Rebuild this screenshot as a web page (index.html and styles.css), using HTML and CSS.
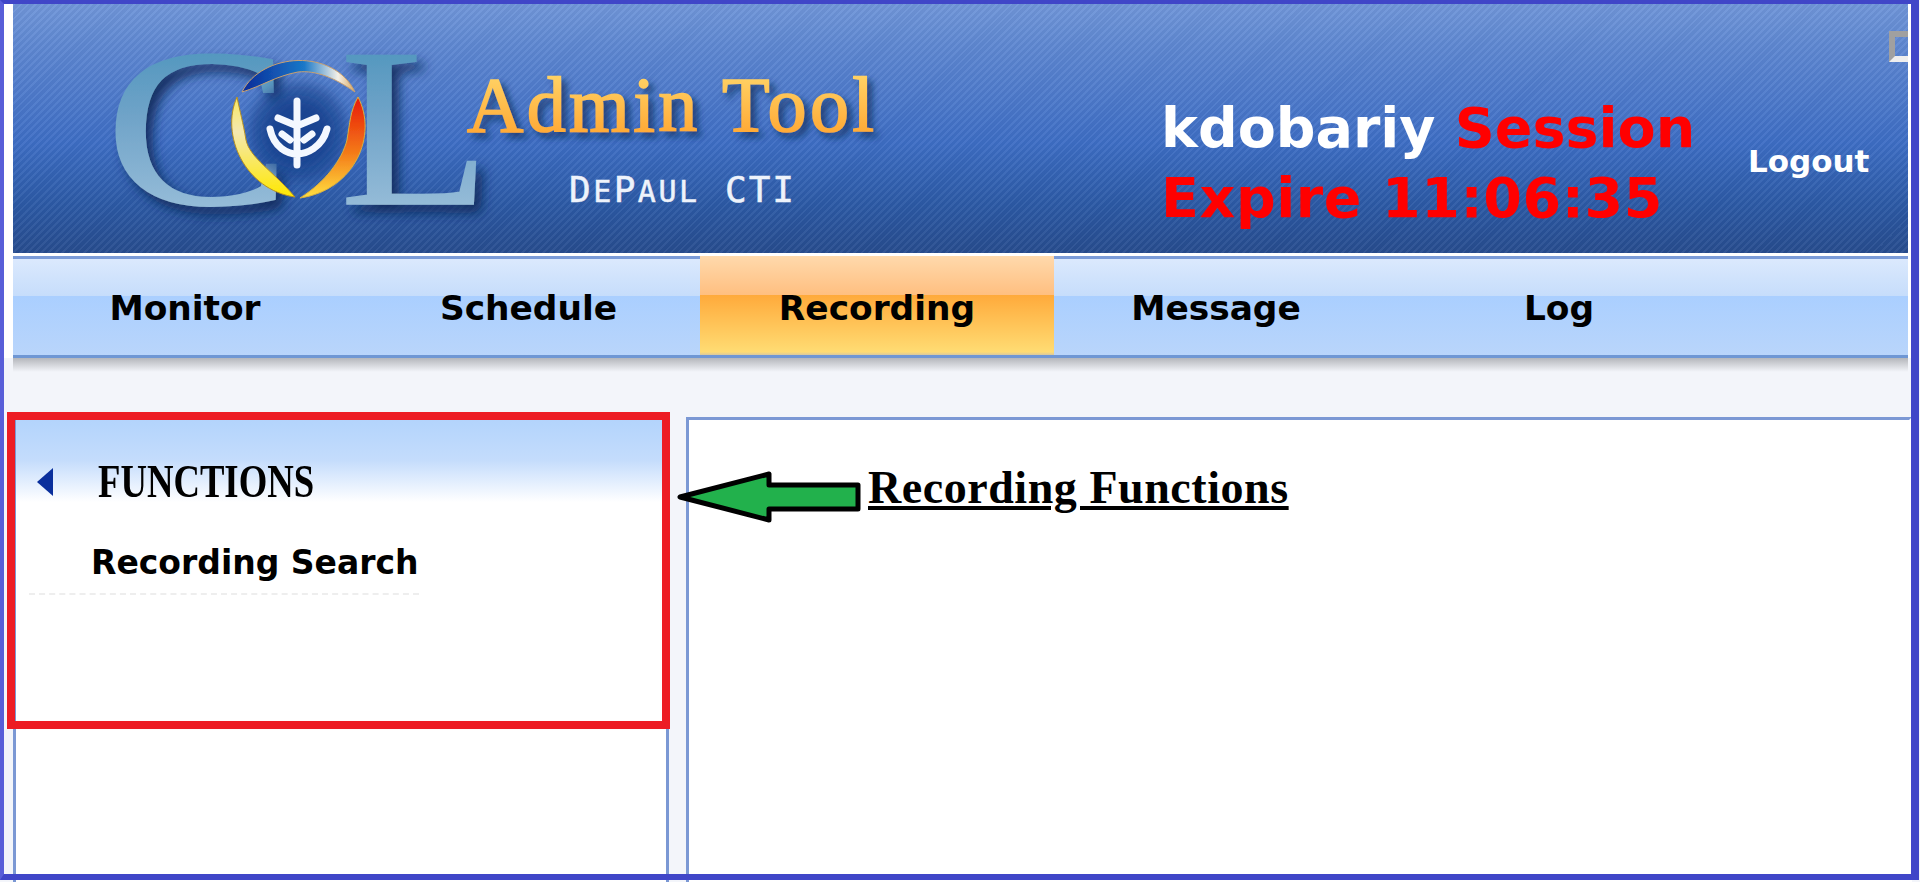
FILE: index.html
```html
<html>

  <head>
    <title>Recording Functions</title>
    <link rel="stylesheet" href="styles.css">
  </head>

  <body>
    <div class="page">
      <div class="top">
        <div class="banner">
          <svg class="logo" width="900" height="249" viewBox="13 4 900 249">
            <defs>
              <linearGradient id="colFill" x1="0" y1="0" x2="0" y2="1">
                <stop offset="0" stop-color="#3f8fb8"/>
                <stop offset="0.45" stop-color="#6fa3c8"/>
                <stop offset="1" stop-color="#a8c8e0"/>
              </linearGradient>
              <linearGradient id="adminFill" x1="0" y1="0" x2="0" y2="1">
                <stop offset="0" stop-color="#ffdc70"/>
                <stop offset="1" stop-color="#ff9f2a"/>
              </linearGradient>
              <linearGradient id="swTop" x1="0" y1="0" x2="1" y2="0">
                <stop offset="0" stop-color="#0a2a98"/>
                <stop offset="0.55" stop-color="#1a78c8"/>
                <stop offset="0.85" stop-color="#f4f0e8"/>
                <stop offset="1" stop-color="#d8a860"/>
              </linearGradient>
              <linearGradient id="swRight" x1="0" y1="0" x2="0" y2="1">
                <stop offset="0" stop-color="#e81808"/>
                <stop offset="0.55" stop-color="#f47a18"/>
                <stop offset="1" stop-color="#ffe040"/>
              </linearGradient>
              <linearGradient id="swLeft" x1="0" y1="0" x2="0" y2="1">
                <stop offset="0" stop-color="#f8e860"/>
                <stop offset="0.35" stop-color="#f4e8b0"/>
                <stop offset="1" stop-color="#ffe800"/>
              </linearGradient>
              <filter id="soft" x="-20%" y="-20%" width="140%" height="140%"><feGaussianBlur stdDeviation="6"/></filter>
              <filter id="tiny" x="-20%" y="-20%" width="140%" height="140%"><feGaussianBlur stdDeviation="0.7"/></filter>
              <filter id="colShadow" x="-20%" y="-20%" width="140%" height="140%"><feDropShadow dx="7" dy="8" stdDeviation="6" flood-color="#0e2c5a" flood-opacity="0.9"/></filter>
              <filter id="adminShadow" x="-10%" y="-20%" width="120%" height="150%"><feDropShadow dx="5" dy="5" stdDeviation="3.5" flood-color="#10305f" flood-opacity="0.8"/></filter>
            </defs>

            <g fill="url(#colFill)" stroke="url(#colFill)" stroke-width="1.5" filter="url(#colShadow)" class="col-letters">
              <text x="105" y="204" textLength="186" lengthAdjust="spacingAndGlyphs">C</text>
              <text x="340" y="204" textLength="150" lengthAdjust="spacingAndGlyphs">L</text>
            </g>

            <circle cx="298" cy="132" r="50" fill="#163f86" opacity="0.55" filter="url(#soft)"/>
            <circle cx="298" cy="132" r="34" fill="#12408e" opacity="0.8" filter="url(#soft)"/>
            <g filter="url(#tiny)">
              <path d="M242 92 C262 52 334 48 355 92 C335 78 316 70 298 72 C276 76 262 86 242 92 Z" fill="url(#swTop)" stroke="#c8a070" stroke-width="1"/>
              <path d="M358 97 C378 135 355 190 300 198 C325 182 342 160 347 140 C350 122 350 112 358 97 Z" fill="url(#swRight)" stroke="#d8b040" stroke-width="1"/>
              <path d="M237 97 C220 135 245 190 295 197 C272 170 250 158 246 140 C243 122 240 112 237 97 Z" fill="url(#swLeft)" stroke="#b89020" stroke-width="1"/>
              <path d="M297 101 V165 M278 118 L297 126 L316 118 M270 129 C274 148 288 154 297 154 C306 154 322 148 327 129 M282 134 L290 140 M312 134 L304 140" fill="none" stroke="#f4f8ff" stroke-width="7" stroke-linecap="round"/>
            </g>

            <text x="467" y="131" class="admin-text" fill="url(#adminFill)" stroke="url(#adminFill)" stroke-width="1.6" filter="url(#adminShadow)" textLength="407" lengthAdjust="spacing">Admin Tool</text>
            <text x="569" y="202" class="depaul-text" textLength="128" lengthAdjust="spacing">D<tspan class="depaul-small">E</tspan>P<tspan class="depaul-small">AUL</tspan></text>
            <text x="725" y="202" class="depaul-text" textLength="69" lengthAdjust="spacing">CTI</text>
          </svg>
          <div class="session">
            <div>kdobariy <span class="warn">Session</span></div>
            <div class="warn expire">Expire 11:06:35</div>
          </div>
          <a class="logout">Logout</a>
          <div class="broken"></div>
        </div>
        <div class="nav">
          <a class="tab tab-monitor">Monitor</a>
          <a class="tab tab-schedule">Schedule</a>
          <a class="tab tab-recording active">Recording</a>
          <a class="tab tab-message">Message</a>
          <a class="tab tab-log">Log</a>
        </div>
      </div>
      <div class="nav-shadow"></div>

      <div class="content">
        <div class="side">
          <div class="side-head">
            <span class="arrow-left"></span>
            <span class="side-title">FUNCTIONS</span>
          </div>
          <div class="side-item">Recording Search</div>
        </div>
        <div class="main">
          <h1 class="main-title">Recording Functions</h1>
        </div>
      </div>
    </div>

    <!-- annotations on top of the screenshot -->
    <div class="red-box"></div>
    <svg class="green-arrow" width="190" height="60" viewBox="675 468 190 60">
      <path d="M680 497 L769 474 V485 H858 V509 H769 V520 Z" fill="#22b14c" stroke="#000" stroke-width="5" stroke-linejoin="round"/>
    </svg>
    <div class="frame"></div>
  </body>

</html>
```
FILE: styles.css
```css
html, body {
  margin: 0;
  padding: 0;
}
body {
  width: 1920px;
  height: 882px;
  overflow: hidden;
  position: relative;
  background-color: #f3f5fa;
  font-family: "DejaVu Sans", Verdana, sans-serif;
}
.page {
  padding: 4px 8px 0 4px;
}
.top {
  background-color: #fff;
  padding: 0 4px 0 9px;
}

/* banner */
.banner {
  display: flex;
  position: relative;
  height: 249px;
  margin-bottom: 3px;
  background:
    repeating-linear-gradient(135deg, rgba(255,255,255,0.05) 0 2px, rgba(0,0,0,0.03) 2px 5px),
    linear-gradient(#7096d9 0, #5f88d2 40px, #3d6dc4 140px, #2c5aa6 200px, #274c8e 249px);
}
.logo {
  flex: none;
}
.col-letters {
  font: 226px "Liberation Serif", serif;
}
.admin-text {
  font: 78px "Liberation Serif", serif;
}
.depaul-text {
  font: 36px "DejaVu Sans Mono", monospace;
  fill: #eef3fb;
  stroke: #eef3fb;
  stroke-width: 0.5;
}
.depaul-small {
  font-size: 30px;
}
.session {
  flex: none;
  width: 587px;
  margin: 89px 0 0 248px;
  font-size: 55.5px;
  line-height: 70px;
  font-weight: bold;
  color: #fff;
  white-space: nowrap;
}
.warn {
  color: #f00;
}
.expire {
  letter-spacing: 0.6px;
}
.logout {
  margin-top: 139px;
  font-size: 31px;
  line-height: 36px;
  font-weight: bold;
  color: #fff;
}
.broken {
  position: absolute;
  right: 0;
  top: 27px;
  width: 13px;
  height: 19px;
  border-top: 6px solid #a0a0a0;
  border-left: 6px solid #a0a0a0;
  border-bottom: 6px solid #eee;
}

/* menu */
.nav {
  display: flex;
  height: 96px;
  border-top: 3px solid #7a9bd8;
  border-bottom: 3px solid #6f97d4;
  background: linear-gradient(#dbe9fd 0, #c6ddfb 37px, #aacfff 37px, #b9d5fb 96px);
}
.tab {
  display: block;
  box-sizing: border-box;
  padding-top: 3px;
  text-align: center;
  font-size: 34.4px;
  line-height: 92px;
  font-weight: bold;
  color: #000;
}
.tab-monitor { width: 344px; }
.tab-schedule { width: 343px; }
.tab-recording { width: 354px; }
.tab-message { width: 324px; }
.tab-log { width: 362px; }
.active {
  margin-top: -3px;
  height: 99px;
  padding-top: 6px;
  background: linear-gradient(#ffd9ac 0, #ffbf80 39px, #ffaa3b 39px, #ffdc73 96px, #d8c8a0 99px);
}
.nav-shadow {
  height: 14px;
  margin-left: 9px;
  margin-right: 4px;
  background: linear-gradient(#b4b6bb, #f3f5fa);
}

/* panels */
.content {
  display: flex;
  margin-top: 45px;
  padding-left: 9px;
  gap: 17px;
}
.side, .main {
  height: 480px;
  border: 3px solid #7b98d4;
  background-color: #fff;
}
.side {
  width: 650px;
}
.main {
  flex: 1;
  border-right-color: transparent;
}
.side-head {
  display: flex;
  align-items: center;
  height: 82px;
  padding: 41px 0 0 21px;
  box-sizing: border-box;
  background: linear-gradient(#b3d4fc 0, #c4dcfc 40px, #fff 82px);
}
.arrow-left {
  width: 0;
  height: 0;
  border-top: 14px solid transparent;
  border-bottom: 14px solid transparent;
  border-right: 16px solid #0a2f9c;
}
.side-title {
  margin-left: 45px;
  font: bold 36.7px "Liberation Serif", serif;
  transform: scaleY(1.25);
  color: #000;
}
.side-item {
  width: 390px;
  height: 65px;
  margin: 28px 0 0 13px;
  padding: 1px 0 0 62px;
  box-sizing: border-box;
  border-bottom: 2px dashed #eee;
  font-size: 33px;
  line-height: 64px;
  font-weight: bold;
  color: #000;
  white-space: nowrap;
}
.main-title {
  display: inline-block;
  margin: 41px 0 0 179px;
  font: bold 46px/54px "Liberation Serif", serif;
  letter-spacing: 0.55px;
  text-decoration: underline;
  text-decoration-thickness: 4px;
  text-underline-offset: 3px;
  color: #000;
}

/* annotations */
.red-box {
  position: absolute;
  left: 7px;
  top: 412px;
  width: 647px;
  height: 301px;
  border: 8px solid #ed1c24;
}
.green-arrow {
  position: absolute;
  left: 675px;
  top: 468px;
}
.frame {
  position: absolute;
  left: 0;
  top: 0;
  width: 1907px;
  height: 870px;
  border-style: solid;
  border-width: 4px 8px 6px 4px;
  border-color: #4046c8;
  border-left-color: #585ed8;
}
```
